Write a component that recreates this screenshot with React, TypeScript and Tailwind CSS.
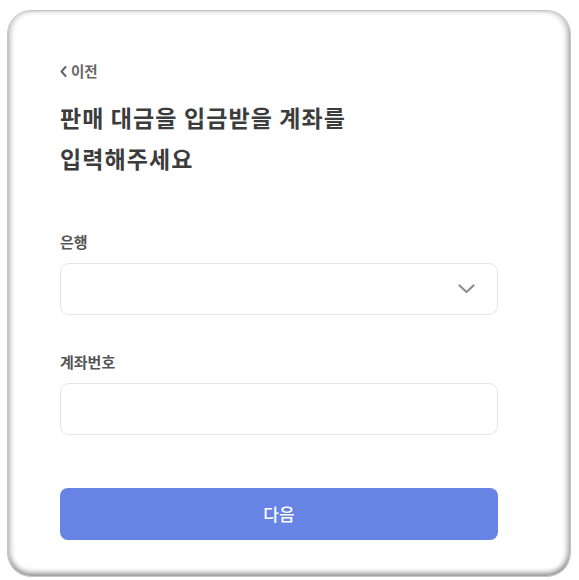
import React from 'react';

const font = { fontFamily: '"Noto Sans CJK KR", "Noto Sans", sans-serif' };

const Field: React.FC<{ label: string; select?: boolean }> = ({ label, select }) => {
  return (
    <div className="flex flex-col">
      <label className="text-[15px] leading-[20px] font-bold text-[#555]">{label}</label>
      <div className="mt-[11px] h-[52px] rounded-[9px] border-[1.5px] border-[#e4e5e8] bg-white flex items-center justify-end pr-[22px]">
        {select && (
          <svg width="17" height="10" viewBox="0 0 17 10" fill="none">
            <path d="M1.5 1.5L8.5 8L15.5 1.5" stroke="#8a8d93" strokeWidth="2.2" strokeLinecap="round" strokeLinejoin="round" />
          </svg>
        )}
      </div>
    </div>
  );
};

export default function App() {
  return (
    <div className="w-[579px] h-[580px] bg-white pt-[10px] pl-[7px]" style={font}>
      <div className="w-[564px] h-[567px] rounded-[24px] border border-[#c4c4c4] bg-white shadow-[inset_0_-4px_5px_rgba(0,0,0,0.3),inset_4px_0_5px_rgba(0,0,0,0.12),inset_-4px_0_5px_rgba(0,0,0,0.18)] pl-[52px] pt-[50px]">
        <div className="w-[438px] flex flex-col">
          {/* 이전 */}
          <div className="flex items-center gap-[4px] h-[20px] text-[#666]">
            <svg width="7" height="11" viewBox="0 0 7 11" fill="none">
              <path d="M5.5 1L1.5 5.5L5.5 10" stroke="#666" strokeWidth="2" strokeLinecap="round" strokeLinejoin="round" />
            </svg>
            <span className="text-[14.5px] font-bold leading-[20px]">이전</span>
          </div>

          <h1 className="mt-[16px] text-[23px] leading-[41px] font-bold text-[#3c3c3c] tracking-[1.1px]">
            판매 대금을 입금받을 계좌를
            <br />
            입력해주세요
          </h1>

          <div className="mt-[53px]">
            <Field label="은행" select />
          </div>
          <div className="mt-[37px]">
            <Field label="계좌번호" />
          </div>

          <button className="mt-[53px] h-[52px] rounded-[8px] bg-[#6783e3] text-white text-[17px] font-medium">
            다음
          </button>
        </div>
      </div>
    </div>
  );
}
